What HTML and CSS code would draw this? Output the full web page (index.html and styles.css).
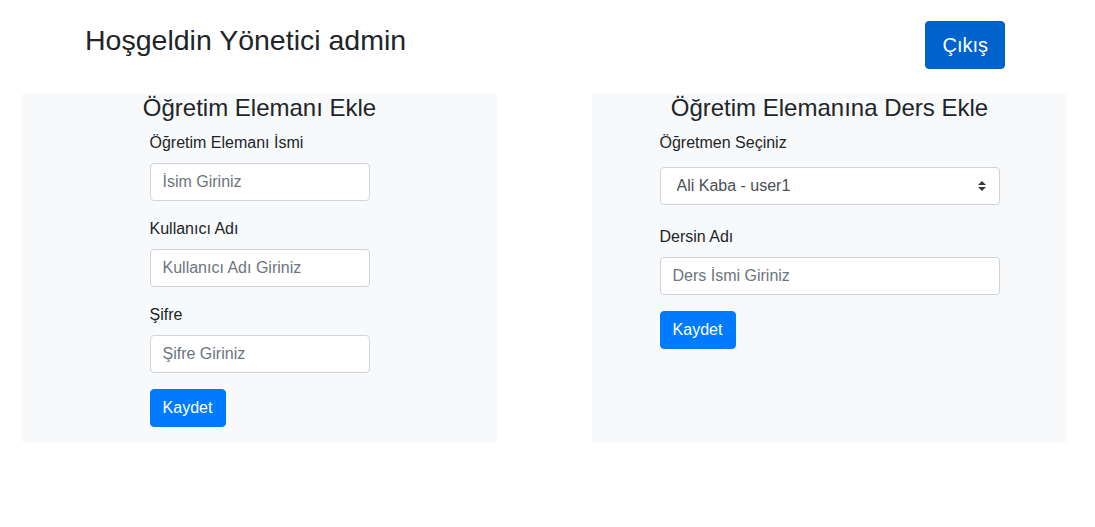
FILE: index.html
```html
<!DOCTYPE html>
<html lang="tr">
<head>
<meta charset="utf-8">
<title>Yönetici</title>
<link rel="stylesheet" href="styles.css">
</head>
<body>
<header class="topbar">
  <h3 class="welcome">Hoşgeldin Yönetici admin</h3>
  <button class="btn btn-lg btn-dark-primary" type="button">Çıkış</button>
</header>
<main class="panels">
  <section class="panel">
    <h4 class="panel-title">Öğretim Elemanı Ekle</h4>
    <form class="form form-narrow">
      <div class="form-group">
        <label class="label">Öğretim Elemanı İsmi</label>
        <input class="form-control" type="text" placeholder="İsim Giriniz">
      </div>
      <div class="form-group">
        <label class="label">Kullanıcı Adı</label>
        <input class="form-control" type="text" placeholder="Kullanıcı Adı Giriniz">
      </div>
      <div class="form-group">
        <label class="label">Şifre</label>
        <input class="form-control" type="password" placeholder="Şifre Giriniz">
      </div>
      <button class="btn btn-primary" type="button">Kaydet</button>
    </form>
  </section>
  <section class="panel">
    <h4 class="panel-title">Öğretim Elemanına Ders Ekle</h4>
    <form class="form form-wide">
      <div class="form-group">
        <label class="label">Öğretmen Seçiniz</label>
        <div class="select-wrap">
          <select class="form-control select">
            <option>Ali Kaba - user1</option>
          </select>
          <svg class="select-arrow" width="8" height="10" viewBox="0 0 4 5" aria-hidden="true"><path fill="#343a40" d="M2 0L0 2h4zm0 5L0 3h4z"/></svg>
        </div>
      </div>
      <div class="form-group">
        <label class="label">Dersin Adı</label>
        <input class="form-control" type="text" placeholder="Ders İsmi Giriniz">
      </div>
      <button class="btn btn-primary" type="button">Kaydet</button>
    </form>
  </section>
</main>
</body>
</html>
```
FILE: styles.css
```css
* { box-sizing: border-box; }

body {
  margin: 0;
  font-family: "Liberation Sans", Arial, sans-serif;
  font-size: 16px;
  line-height: 1.5;
  color: #212529;
  background: #fff;
}

.topbar {
  display: flex;
  justify-content: space-between;
  align-items: flex-start;
  width: 920px;
  margin-left: 85px;
  padding-top: 21px;
  height: 94px;
}

.welcome {
  margin: 2px 0 0;
  font-size: 28.5px;
  font-weight: 400;
  line-height: 1.2;
}

.btn {
  display: inline-block;
  font-family: inherit;
  font-weight: 400;
  color: #fff;
  text-align: center;
  border: 1px solid transparent;
  padding: 6px 12px;
  font-size: 16px;
  line-height: 1.5;
  border-radius: 4px;
  cursor: pointer;
}

.btn-lg {
  padding: 8px 16px;
  font-size: 20px;
  line-height: 1.5;
  border-radius: 4px;
}

.btn-dark-primary {
  background: #0062cc;
  border-color: #005cbf;
}

.btn-primary {
  background: #007bff;
  border-color: #007bff;
  min-width: 76px;
}

.panels {
  display: flex;
  gap: 95px;
  margin-left: 22px;
}

.panel {
  width: 475px;
  height: 348px;
  background: #f8f9fa;
}

.panel-title {
  margin: 0 0 8px;
  font-size: 24px;
  font-weight: 400;
  line-height: 1.2;
  text-align: center;
}

.form {
  margin: 0 auto;
}

.form-narrow { width: 220px; }
.form-wide { width: 340px; }

.form-group {
  display: flow-root;
  margin-bottom: 16px;
}

.label {
  display: inline-block;
  margin-bottom: 8px;
}

.form-control {
  display: block;
  width: 100%;
  height: 38px;
  padding: 6px 12px;
  font-family: inherit;
  font-size: 16px;
  line-height: 1.5;
  color: #495057;
  background: #fff;
  border: 1px solid #ced4da;
  border-radius: 4px;
}

.form-control::placeholder {
  color: #6c757d;
  opacity: 1;
}

.select-wrap {
  position: relative;
  margin: 4px 0;
}

.select {
  appearance: none;
  -webkit-appearance: none;
  padding-left: 16px;
  padding-right: 28px;
}

.select-arrow {
  position: absolute;
  right: 14px;
  top: 14px;
  pointer-events: none;
}
```
